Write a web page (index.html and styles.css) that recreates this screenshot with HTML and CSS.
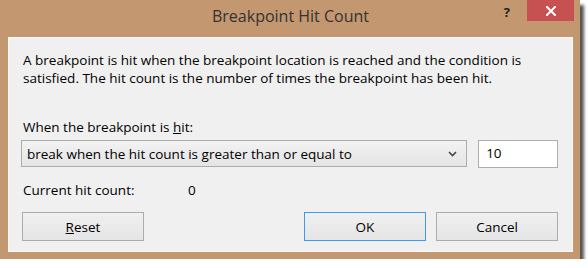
FILE: index.html
```html
<!DOCTYPE html>
<html lang="en">

<head>
    <meta charset="UTF-8">
    <meta name="viewport" content="width=device-width, initial-scale=1.0">
    <title>Breakpoint Hit Count</title>
    <link rel="stylesheet" href="styles.css">
</head>

<body>
    <div class="window">
        <div class="titlebar">
            <span class="title">Breakpoint Hit Count</span>
            <div class="caption-buttons">
                <span class="help">?</span>
                <button class="close" aria-label="Close">
                    <svg width="10" height="10" viewBox="0 0 10 10">
                        <path d="M1 1 L9 9 M9 1 L1 9" stroke="#fff" stroke-width="2" stroke-linecap="square" fill="none" />
                    </svg>
                </button>
            </div>
        </div>

        <div class="client">
            <p class="intro">A breakpoint is hit when the breakpoint location is reached and the condition is
                satisfied. The hit count is the number of times the breakpoint has been hit.</p>

            <div class="field-label">When the breakpoint is <u>h</u>it:</div>

            <div class="condition-row">
                <div class="combo">
                    <span>break when the hit count is greater than or equal to</span>
                    <svg class="chevron" width="9" height="6" viewBox="0 0 9 6">
                        <path d="M1 1 L4.5 4.5 L8 1" stroke="#444" stroke-width="1.6" fill="none" />
                    </svg>
                </div>
                <div class="count-input">10</div>
            </div>

            <div class="current-row">
                <span class="current-label">Current hit count:</span>
                <span>0</span>
            </div>

            <div class="button-row">
                <button class="btn"><u>R</u>eset</button>
                <div class="spacer"></div>
                <button class="btn default">OK</button>
                <button class="btn">Cancel</button>
            </div>
        </div>
    </div>
</body>

</html>
```

FILE: styles.css
```css
body {
    margin: 0;
    background: #fff;
    font-family: "Open Sans", "Noto Sans", sans-serif;
}

/* janela do dialogo */
.window {
    width: 580px;
    height: 259px;
    box-sizing: border-box;
    padding: 0 7px 7px 8px;
    background: #c3976f;
    box-shadow: 4px 5px 3px rgba(30, 30, 30, 0.75);
    display: flex;
    flex-direction: column;
}

.titlebar {
    height: 37px;
    flex-shrink: 0;
    display: grid;
    grid-template-columns: 1fr auto 1fr;
    align-items: start;
}

.title {
    grid-column: 2;
    font-size: 16px;
    line-height: 32px;
    color: #333;
}

.caption-buttons {
    grid-column: 3;
    justify-self: end;
    display: flex;
    align-items: flex-start;
    margin-right: -1px;
}

.help {
    font-size: 13px;
    font-weight: bold;
    line-height: 24px;
    color: #222;
    margin-right: 17px;
}

.close {
    width: 47px;
    height: 21px;
    padding: 0;
    border: none;
    background: #c75050;
    display: flex;
    align-items: center;
    justify-content: center;
}

/* area do conteudo */
.client {
    flex: 1;
    background: #f0f0f0;
    box-shadow: inset 0 0 0 1px #fafafa;
    padding: 14px 15px 0 14px;
    font-size: 13.5px;
    line-height: 18px;
    color: #000;
}

.intro {
    margin: 0 0 31px 1px;
}

.field-label {
    margin-left: 1px;
}

.condition-row {
    display: flex;
    align-items: flex-start;
    gap: 11px;
    margin: 4px 0 0 -1px;
}

.combo {
    width: 447px;
    height: 27px;
    box-sizing: border-box;
    border: 1px solid #acacac;
    background: linear-gradient(#f2f2f2, #e5e5e5);
    padding: 0 9px 0 5px;
    display: flex;
    align-items: center;
    justify-content: space-between;
}

.count-input {
    width: 80px;
    height: 28px;
    box-sizing: border-box;
    border: 1px solid #abadb3;
    background: #fff;
    padding: 0 7px;
    line-height: 24px;
}

.current-row {
    display: flex;
    margin: 13px 0 0 1px;
}

.current-label {
    width: 165px;
}

.button-row {
    display: flex;
    gap: 10px;
    margin-top: 13px;
}

.spacer {
    flex: 1;
}

.btn {
    width: 122px;
    height: 29px;
    border: 1px solid #acacac;
    background: linear-gradient(#f0f0f0, #e5e5e5);
    font-family: inherit;
    font-size: 13.5px;
    color: #000;
    padding: 0;
}

.btn.default {
    border-color: #3c9bf0;
}
```
